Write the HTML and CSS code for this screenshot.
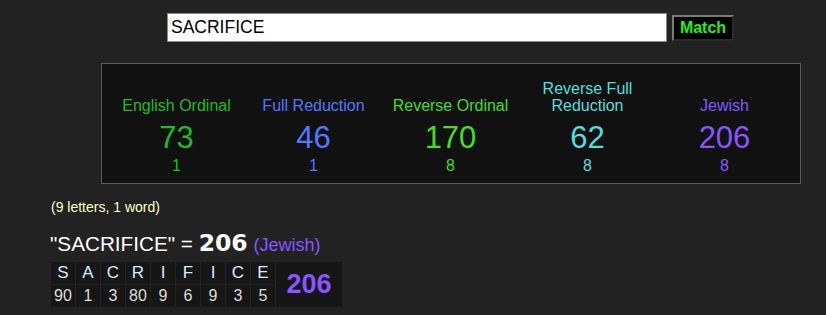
FILE: index.html
```html
<!DOCTYPE html>
<html>
<head>
<meta charset="utf-8">
<link rel="stylesheet" href="styles.css">
</head>
<body>
<div class="search">
  <input class="search-input" type="text" value="SACRIFICE">
  <button class="match-btn">Match</button>
</div>
<div class="panel">
  <div class="col c-eo">
    <div class="label">English Ordinal</div>
    <div class="num">73</div>
    <div class="sub">1</div>
  </div>
  <div class="col c-fr">
    <div class="label">Full Reduction</div>
    <div class="num">46</div>
    <div class="sub">1</div>
  </div>
  <div class="col c-ro">
    <div class="label">Reverse Ordinal</div>
    <div class="num">170</div>
    <div class="sub">8</div>
  </div>
  <div class="col c-rfr">
    <div class="label">Reverse Full<br>Reduction</div>
    <div class="num">62</div>
    <div class="sub">8</div>
  </div>
  <div class="col c-jw">
    <div class="label">Jewish</div>
    <div class="num">206</div>
    <div class="sub">8</div>
  </div>
</div>
<div class="count">(9 letters, 1 word)</div>
<div class="phrase">"SACRIFICE" = <span class="phrase-val">206</span> <span class="phrase-cipher">(Jewish)</span></div>
<table class="breakdown">
  <tr class="letters">
    <td>S</td><td>A</td><td>C</td><td>R</td><td>I</td><td>F</td><td>I</td><td>C</td><td>E</td>
    <td class="total" rowspan="2">206</td>
  </tr>
  <tr class="values">
    <td>90</td><td>1</td><td>3</td><td>80</td><td>9</td><td>6</td><td>9</td><td>3</td><td>5</td>
  </tr>
</table>
</body>
</html>
```
FILE: styles.css
```css
html, body {
  margin: 0;
  padding: 0;
  background: #222222;
  font-family: "Liberation Sans", Arial, sans-serif;
  color: #ffffff;
}

.search {
  display: flex;
  align-items: flex-start;
  gap: 5px;
  padding: 13px 0 0 167px;
}

.search-input {
  box-sizing: border-box;
  width: 500px;
  height: 29px;
  margin: 0;
  padding: 0 3px;
  border: 1px solid #8a8a8a;
  background: #ffffff;
  color: #000000;
  font-family: "Liberation Sans", Arial, sans-serif;
  font-size: 17.5px;
}

.match-btn {
  box-sizing: border-box;
  width: 62px;
  height: 26px;
  margin: 2px 0 0 0;
  padding: 0;
  background: #000000;
  color: #22ee22;
  font-family: "Liberation Sans", Arial, sans-serif;
  font-weight: bold;
  font-size: 16px;
  border: 2px solid;
  border-color: #7a7a7a #2a2a2a #2a2a2a #7a7a7a;
}

.panel {
  box-sizing: border-box;
  width: 700px;
  height: 121px;
  margin: 21px 0 0 101px;
  padding: 0 6px 8px 6px;
  background: #111111;
  border: 1px solid #5a5a5a;
  display: flex;
  align-items: flex-end;
}

.col {
  width: 137px;
  display: flex;
  flex-direction: column;
  align-items: center;
  text-align: center;
}

.label {
  font-size: 16px;
  line-height: 17px;
}

.num {
  font-size: 31px;
  line-height: 36px;
  margin-top: 6px;
}

.sub {
  font-size: 16px;
  line-height: 18px;
  margin-top: 1px;
}

.c-eo { color: #1fbb1f; }
.c-fr { color: #5577ff; }
.c-ro { color: #44dd22; }
.c-rfr { color: #55dddd; }
.c-jw { color: #8855ff; }

.count {
  margin: 14px 0 0 51px;
  font-size: 14px;
  line-height: 18px;
  color: #ffffcc;
}

.phrase {
  margin: 15px 0 0 50px;
  font-size: 20.7px;
  line-height: 24px;
  color: #ffffff;
}

.phrase-val {
  font-family: "DejaVu Sans", sans-serif;
  font-weight: bold;
  font-size: 23.5px;
}

.phrase-cipher {
  font-size: 18px;
  color: #8855ff;
}

.breakdown {
  margin: 4px 0 0 50px;
  border-collapse: collapse;
  background: #161616;
}

.breakdown td {
  width: 24px;
  height: 22px;
  padding: 0;
  text-align: center;
  border: 1px solid #222222;
  background: #161616;
}

.letters td {
  font-size: 17px;
  color: #d8ecff;
}

.values td {
  font-size: 16px;
  color: #dddddd;
}

.breakdown td.total {
  width: 66px;
  font-size: 27px;
  font-weight: bold;
  color: #8855ff;
}
```
